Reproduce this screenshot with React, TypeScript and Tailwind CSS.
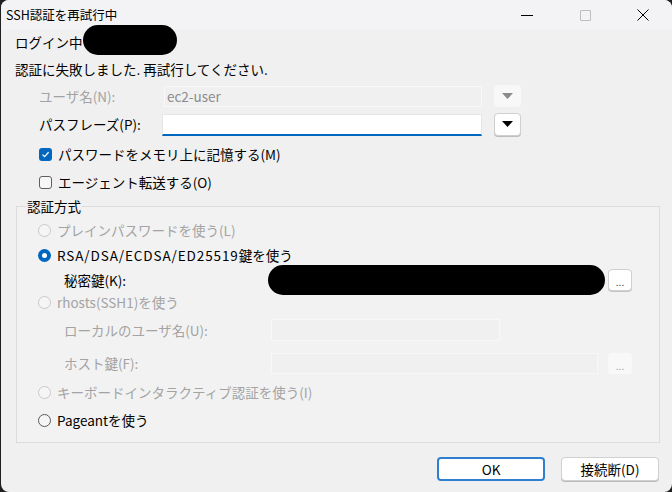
import React from "react";

const font = { fontFamily: '"Noto Sans CJK JP", "Noto Sans", sans-serif' };

function Check({ checked }: { checked?: boolean }) {
  if (checked) {
    return (
      <span className="flex h-[13px] w-[13px] items-center justify-center rounded-[3px] bg-[#0067c0]">
        <svg width="9" height="9" viewBox="0 0 9 9">
          <path d="M1.5 4.6 L3.6 6.6 L7.6 2.2" fill="none" stroke="#fff" strokeWidth="1.3" />
        </svg>
      </span>
    );
  }
  return <span className="h-[13px] w-[13px] rounded-[3px] border border-[#5f5f5f] bg-[#f7f7f7]" />;
}

function Radio({ state }: { state: "on" | "off" | "disabled" }) {
  if (state === "on") {
    return (
      <span className="flex h-[13px] w-[13px] items-center justify-center rounded-full bg-[#0067c0]">
        <span className="h-[5px] w-[5px] rounded-full bg-white" />
      </span>
    );
  }
  if (state === "disabled") {
    return <span className="h-[13px] w-[13px] rounded-full border border-[#c9c9c9] bg-[#f5f5f5]" />;
  }
  return <span className="h-[13px] w-[13px] rounded-full border border-[#5a5a5a] bg-[#f5f5f5]" />;
}

function DropBtn({ disabled }: { disabled?: boolean }) {
  return (
    <span
      className={
        disabled
          ? "flex h-[22px] w-[27px] items-center justify-center rounded-[4px] bg-[#f8f8f8]"
          : "flex h-[23px] w-[27px] items-center justify-center rounded-[4px] border border-[#cfcfcf] bg-white shadow-[0_1px_0_#bdbdbd]"
      }
    >
      <svg width="11" height="7" viewBox="0 0 11 7">
        <path d="M0 0 H11 L5.5 6 Z" fill={disabled ? "#8a8a8a" : "#000"} />
      </svg>
    </span>
  );
}

function DotsBtn({ disabled }: { disabled?: boolean }) {
  return (
    <span
      className={
        disabled
          ? "flex h-[21px] w-[24px] items-end justify-center rounded-[4px] bg-[#f8f8f8] pb-[3px] text-[10px] leading-none text-[#a0a0a0]"
          : "flex h-[22px] w-[24px] items-end justify-center rounded-[4px] border border-[#d0d0d0] bg-white pb-[3px] text-[10px] leading-none text-[#333] shadow-[0_1px_0_#c4c4c4]"
      }
    >
      ...
    </span>
  );
}

export default function App() {
  return (
    <div className="h-[492px] w-[672px] bg-[#202020] text-[13.5px] text-black" style={font}>
      <div className="ml-px flex h-[492px] w-[671px] flex-col overflow-hidden rounded-[8px] bg-[#f0f0f0]">
        {/* title bar */}
        <div className="flex h-[30px] items-center bg-[#f3f3f5] pl-[5px]">
          <span className="text-[12.5px]">SSH認証を再試行中</span>
          <div className="ml-auto flex h-full items-center">
            <span className="flex w-[58px] justify-center">
              <span className="h-px w-[12px] bg-black" />
            </span>
            <span className="flex w-[58px] justify-center">
              <span className="h-[11px] w-[11px] rounded-[1px] border border-[#bdbdbd]" />
            </span>
            <span className="flex w-[58px] justify-center">
              <svg width="12" height="12" viewBox="0 0 12 12">
                <path d="M0.5 0.5 L11.5 11.5 M11.5 0.5 L0.5 11.5" stroke="#000" strokeWidth="1" />
              </svg>
            </span>
          </div>
        </div>

        {/* body */}
        <div className="flex flex-col px-[14px]">
          <div className="relative flex h-[24px] items-center">
            <span>ログイン中</span>
            <span className="absolute left-[68px] top-[-5px] h-[30px] w-[94px] rounded-full bg-black" />
          </div>
          <div className="mt-[3px] flex h-[24px] items-center">認証に失敗しました. 再試行してください.</div>

          <div className="mt-[4px] flex h-[22px] items-center pl-[24px]">
            <span className="w-[125px] text-[#a3a3a3]">ユーザ名(N):</span>
            <span className="flex h-[21px] w-[318px] items-center border border-[#f8f8f8] bg-[#f0f0f0] px-[2px] text-[#8c8c8c]">
              ec2-user
            </span>
            <span className="ml-[12px]">
              <DropBtn disabled />
            </span>
          </div>

          <div className="mt-[6px] flex h-[23px] items-center pl-[24px]">
            <span className="w-[123px]">パスフレーズ(P):</span>
            <span className="h-[22px] w-[320px] border border-[#e6e6e6] border-b-2 border-b-[#0067c0] bg-white" />
            <span className="ml-[12px]">
              <DropBtn />
            </span>
          </div>

          <div className="mt-[8px] flex h-[20px] items-center gap-[6px] pl-[24px]">
            <Check checked />
            <span>パスワードをメモリ上に記憶する(M)</span>
          </div>
          <div className="mt-[8px] flex h-[20px] items-center gap-[6px] pl-[24px]">
            <Check />
            <span>エージェント転送する(O)</span>
          </div>
        </div>

        {/* group box */}
        <div className="relative ml-[15px] mt-[14px] w-[644px] border border-[#dcdcdc] bg-[#f2f2f2] pb-[12px] pl-[21px]">
          <span className="absolute left-[9px] top-[-11px] bg-[#f0f0f0] px-px leading-[20px]">認証方式</span>

          <div className="mt-[13px] flex h-[20px] items-center gap-[6px] text-[#a3a3a3]">
            <Radio state="disabled" />
            <span>プレインパスワードを使う(L)</span>
          </div>
          <div className="mt-[5px] flex h-[20px] items-center gap-[6px]">
            <Radio state="on" />
            <span>
              <span className="tracking-[0.9px]">RSA/DSA/ECDSA/ED25519</span>鍵を使う
            </span>
          </div>
          <div className="mt-[3px] flex h-[24px] items-center pl-[26px]">
            <span className="w-[204px]">秘密鍵(K):</span>
            <span className="h-[30px] w-[337px] shrink-0 rounded-full bg-black" />
            <span className="ml-[3px]">
              <DotsBtn />
            </span>
          </div>
          <div className="flex h-[20px] items-center gap-[6px] text-[#a3a3a3]">
            <Radio state="disabled" />
            <span>rhosts(SSH1)を使う</span>
          </div>
          <div className="mt-[7px] flex h-[22px] items-center pl-[26px] text-[#a3a3a3]">
            <span className="w-[207px]">ローカルのユーザ名(U):</span>
            <span className="h-[22px] w-[229px] border border-[#f8f8f8] bg-[#f0f0f0]" />
          </div>
          <div className="mt-[12px] flex h-[21px] items-center pl-[26px] text-[#a3a3a3]">
            <span className="w-[207px]">ホスト鍵(F):</span>
            <span className="h-[21px] w-[327px] border border-[#f8f8f8] bg-[#f0f0f0]" />
            <span className="ml-[10px]">
              <DotsBtn disabled />
            </span>
          </div>
          <div className="mt-[8px] flex h-[20px] items-center gap-[6px] text-[#a3a3a3]">
            <Radio state="disabled" />
            <span>キーボードインタラクティブ認証を使う(I)</span>
          </div>
          <div className="mt-[8px] flex h-[20px] items-center gap-[6px]">
            <Radio state="off" />
            <span>Pageantを使う</span>
          </div>
        </div>

        {/* buttons */}
        <div className="mt-[14px] flex justify-end gap-[16px] pr-[13px]">
          <span className="flex h-[24px] w-[108px] items-center justify-center rounded-[4px] border-2 border-[#2f7fd0] bg-white">
            OK
          </span>
          <span className="flex h-[24px] w-[98px] items-center justify-center rounded-[4px] border border-[#d0d0d0] bg-white shadow-[0_1px_0_#bcbcbc]">
            接続断(D)
          </span>
        </div>
      </div>
    </div>
  );
}
